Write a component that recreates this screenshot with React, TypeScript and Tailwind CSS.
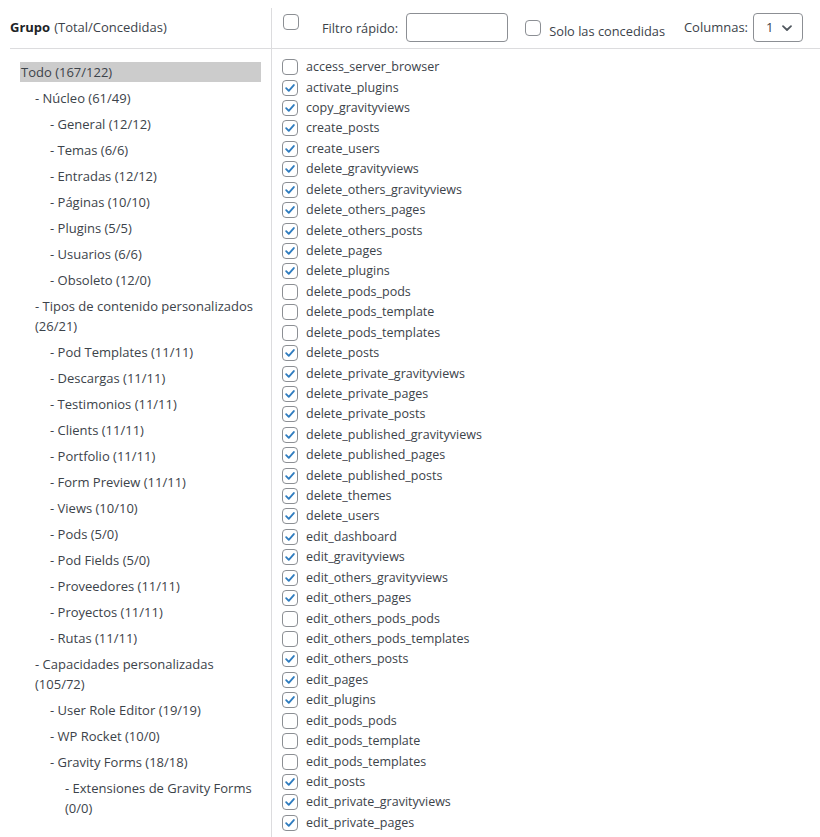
import React from 'react';

const caps: [string, boolean][] = [
  ['access_server_browser', false],
  ['activate_plugins', true],
  ['copy_gravityviews', true],
  ['create_posts', true],
  ['create_users', true],
  ['delete_gravityviews', true],
  ['delete_others_gravityviews', true],
  ['delete_others_pages', true],
  ['delete_others_posts', true],
  ['delete_pages', true],
  ['delete_plugins', true],
  ['delete_pods_pods', false],
  ['delete_pods_template', false],
  ['delete_pods_templates', false],
  ['delete_posts', true],
  ['delete_private_gravityviews', true],
  ['delete_private_pages', true],
  ['delete_private_posts', true],
  ['delete_published_gravityviews', true],
  ['delete_published_pages', true],
  ['delete_published_posts', true],
  ['delete_themes', true],
  ['delete_users', true],
  ['edit_dashboard', true],
  ['edit_gravityviews', true],
  ['edit_others_gravityviews', true],
  ['edit_others_pages', true],
  ['edit_others_pods_pods', false],
  ['edit_others_pods_templates', false],
  ['edit_others_posts', true],
  ['edit_pages', true],
  ['edit_plugins', true],
  ['edit_pods_pods', false],
  ['edit_pods_template', false],
  ['edit_pods_templates', false],
  ['edit_posts', true],
  ['edit_private_gravityviews', true],
  ['edit_private_pages', true],
];

const groups: [number, string][] = [
  [0, 'Todo (167/122)'],
  [1, 'Núcleo (61/49)'],
  [2, 'General (12/12)'],
  [2, 'Temas (6/6)'],
  [2, 'Entradas (12/12)'],
  [2, 'Páginas (10/10)'],
  [2, 'Plugins (5/5)'],
  [2, 'Usuarios (6/6)'],
  [2, 'Obsoleto (12/0)'],
  [1, 'Tipos de contenido personalizados (26/21)'],
  [2, 'Pod Templates (11/11)'],
  [2, 'Descargas (11/11)'],
  [2, 'Testimonios (11/11)'],
  [2, 'Clients (11/11)'],
  [2, 'Portfolio (11/11)'],
  [2, 'Form Preview (11/11)'],
  [2, 'Views (10/10)'],
  [2, 'Pods (5/0)'],
  [2, 'Pod Fields (5/0)'],
  [2, 'Proveedores (11/11)'],
  [2, 'Proyectos (11/11)'],
  [2, 'Rutas (11/11)'],
  [1, 'Capacidades personalizadas (105/72)'],
  [2, 'User Role Editor (19/19)'],
  [2, 'WP Rocket (10/0)'],
  [2, 'Gravity Forms (18/18)'],
  [3, 'Extensiones de Gravity Forms (0/0)'],
];

const indent = ['pl-[1px]', 'pl-[15px]', 'pl-[30px]', 'pl-[45px]'];

const Checkbox: React.FC<{ checked?: boolean }> = ({ checked }) => (
  <span className="flex h-4 w-4 shrink-0 items-center justify-center rounded-[4px] border border-[#8c8f94] bg-white">
    {checked && (
      <svg viewBox="0 0 16 16" className="h-[14px] w-[14px]">
        <path d="M3.6 8.2l3 3 5.8-6.6" fill="none" stroke="#2f7cbf" strokeWidth="2.1" strokeLinecap="round" strokeLinejoin="round" />
      </svg>
    )}
  </span>
);

export default function App() {
  return (
    <div className="min-h-[837px] bg-white pl-[10px] pt-[8px] text-[13px] text-[#3c434a]" style={{ fontFamily: '"Open Sans", "Noto Sans", sans-serif' }}>
      <div className="flex">
        {/* Groups */}
        <div className="w-[262px] shrink-0 border-r border-[#dcdcde] min-h-[829px]">
          <div className="flex h-[41px] items-center border-b border-[#dcdcde]">
            <span className="font-bold text-[#1d2327]">Grupo</span>
            <span className="ml-1">(Total/Concedidas)</span>
          </div>
          <ul className="px-[10px] pt-[13px]">
            {groups.map(([lvl, label], i) => (
              <li key={i} className={`mb-[6px] leading-[20px] ${indent[lvl]} ${i === 0 ? 'bg-[#cccccc]' : ''}`}>
                {lvl > 0 ? `- ${label}` : label}
              </li>
            ))}
          </ul>
        </div>

        {/* Capabilities */}
        <div className="flex-1">
          <div className="flex h-[41px] items-start border-b border-[#dcdcde] pl-[11px]">
            <div className="mt-[6px]"><Checkbox /></div>
            <span className="ml-[23px] mt-[10px] text-[12.8px] leading-[20px]">Filtro rápido:</span>
            <div className="ml-[8px] mt-[5px] h-[29px] w-[102px] rounded-[4px] border border-[#8c8f94] bg-white" />
            <div className="ml-[17px] mt-[12px]"><Checkbox /></div>
            <span className="ml-[8px] mt-[13px] text-[12.8px] leading-[20px]">Solo las concedidas</span>
            <span className="ml-auto mt-[9px] leading-[20px]">Columnas:</span>
            <div className="ml-[5px] mr-[17px] mt-[5px] flex h-[29px] w-[50px] items-center justify-between rounded-[4px] border border-[#8c8f94] bg-white pl-[12px] pr-[9px]">
              <span>1</span>
              <svg viewBox="0 0 12 12" className="h-[12px] w-[12px]">
                <path d="M2 4.2l4 3.8 4-3.8" fill="none" stroke="#50575e" strokeWidth="1.8" strokeLinecap="round" strokeLinejoin="round" />
              </svg>
            </div>
          </div>
          <ul className="pl-[10px] pt-[8px] text-[12.5px]">
            {caps.map(([name, on]) => (
              <li key={name} className="flex h-[20.43px] items-center">
                <Checkbox checked={on} />
                <span className="ml-[8px] leading-[20px]">{name}</span>
              </li>
            ))}
          </ul>
        </div>
      </div>
    </div>
  );
}
